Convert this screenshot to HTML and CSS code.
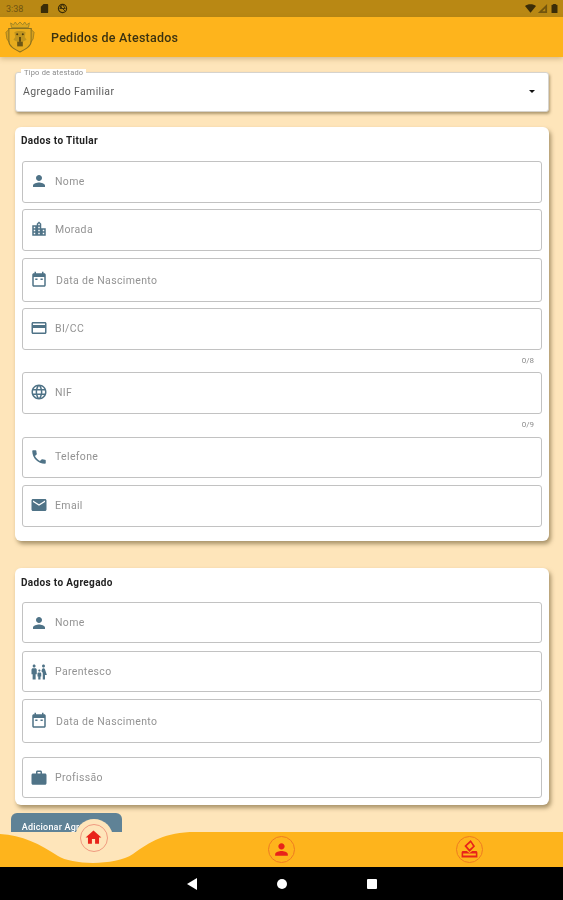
FILE: index.html
```html
<!doctype html>
<html lang="pt">
  <head>
    <meta charset="UTF-8" />
    <meta name="viewport" content="width=device-width, initial-scale=1.0" />
    <title>Pedidos de Atestados</title>
    <link rel="stylesheet" href="styles.css">
  </head>
  <body>
    <!-- Icon sprite -->
    <svg class="sprite" xmlns="http://www.w3.org/2000/svg">
      <symbol id="i-person" viewBox="0 0 24 24"><path d="M12 12c2.21 0 4-1.79 4-4s-1.79-4-4-4-4 1.79-4 4 1.79 4 4 4zm0 2c-2.67 0-8 1.34-8 4v2h16v-2c0-2.66-5.33-4-8-4z"/></symbol>
      <symbol id="i-city" viewBox="0 0 24 24"><path d="M15 11V5l-3-3-3 3v2H3v14h18V11h-6zm-8 8H5v-2h2v2zm0-4H5v-2h2v2zm0-4H5V9h2v2zm6 8h-2v-2h2v2zm0-4h-2v-2h2v2zm0-4h-2V9h2v2zm0-4h-2V5h2v2zm6 12h-2v-2h2v2zm0-4h-2v-2h2v2z"/></symbol>
      <symbol id="i-date" viewBox="0 0 24 24"><path d="M19 3h-1V1h-2v2H8V1H6v2H5c-1.1 0-2 .9-2 2v14c0 1.1.9 2 2 2h14c1.1 0 2-.9 2-2V5c0-1.1-.9-2-2-2zm0 16H5V8h14v11zM7 10h3v2H7zm7 0h3v2h-3z"/></symbol>
      <symbol id="i-card" viewBox="0 0 24 24"><path d="M20 4H4c-1.11 0-1.99.89-1.99 2L2 18c0 1.11.89 2 2 2h16c1.11 0 2-.89 2-2V6c0-1.11-.89-2-2-2zm0 14H4v-6h16v6zm0-10H4V6h16v2z"/></symbol>
      <symbol id="i-globe" viewBox="0 0 24 24"><path d="M11.99 2C6.47 2 2 6.48 2 12s4.47 10 9.99 10C17.52 22 22 17.52 22 12S17.52 2 11.99 2zm6.93 6h-2.95c-.32-1.25-.78-2.45-1.38-3.56 1.84.63 3.37 1.91 4.33 3.56zM12 4.04c.83 1.2 1.48 2.53 1.91 3.96h-3.82c.43-1.43 1.08-2.76 1.91-3.96zM4.26 14C4.1 13.36 4 12.69 4 12s.1-1.36.26-2h3.38c-.08.66-.14 1.32-.14 2 0 .68.06 1.34.14 2H4.26zm.82 2h2.95c.32 1.25.78 2.45 1.38 3.56-1.84-.63-3.37-1.9-4.33-3.56zm2.95-8H5.08c.96-1.66 2.49-2.93 4.33-3.56C8.81 5.55 8.35 6.75 8.03 8zM12 19.96c-.83-1.2-1.48-2.53-1.91-3.96h3.82c-.43 1.43-1.08 2.76-1.91 3.96zM14.34 14H9.66c-.09-.66-.16-1.32-.16-2 0-.68.07-1.35.16-2h4.68c.09.65.16 1.32.16 2 0 .68-.07 1.34-.16 2zm.25 5.56c.6-1.11 1.06-2.31 1.38-3.56h2.95c-.96 1.65-2.49 2.93-4.33 3.56zM16.36 14c.08-.66.14-1.32.14-2 0-.68-.06-1.34-.14-2h3.38c.16.64.26 1.31.26 2s-.1 1.36-.26 2h-3.38z"/></symbol>
      <symbol id="i-phone" viewBox="0 0 24 24"><path d="M6.62 10.79c1.44 2.83 3.76 5.14 6.59 6.59l2.2-2.2c.27-.27.67-.36 1.02-.24 1.12.37 2.33.57 3.57.57.55 0 1 .45 1 1V20c0 .55-.45 1-1 1-9.39 0-17-7.61-17-17 0-.55.45-1 1-1h3.5c.55 0 1 .45 1 1 0 1.25.2 2.45.57 3.57.11.35.03.74-.25 1.02l-2.2 2.2z"/></symbol>
      <symbol id="i-mail" viewBox="0 0 24 24"><path d="M20 4H4c-1.1 0-1.99.9-1.99 2L2 18c0 1.1.9 2 2 2h16c1.1 0 2-.9 2-2V6c0-1.1-.9-2-2-2zm0 4l-8 5-8-5V6l8 5 8-5v2z"/></symbol>
      <symbol id="i-family" viewBox="0 0 24 24"><path d="M16 4c0-1.11.89-2 2-2s2 .89 2 2-.89 2-2 2-2-.89-2-2zm4 18v-6h2.5l-2.54-7.63C19.68 7.55 18.92 7 18.06 7h-.12c-.86 0-1.63.55-1.9 1.37l-.86 2.58c1.08.6 1.82 1.73 1.82 3.05v8h4zm-7.5-10.5c.83 0 1.5-.67 1.5-1.5s-.67-1.5-1.5-1.5S11 9.17 11 10s.67 1.5 1.5 1.5zM5.5 6c1.11 0 2-.89 2-2s-.89-2-2-2-2 .89-2 2 .89 2 2 2zm2 16v-7H9V9c0-1.1-.9-2-2-2H4c-1.1 0-2 .9-2 2v6h1.5v7h4zm6.5 0v-4h1v-4c0-.82-.68-1.5-1.5-1.5h-2c-.82 0-1.5.68-1.5 1.5v4h1v4h3z"/></symbol>
      <symbol id="i-work" viewBox="0 0 24 24"><path d="M20 6h-4V4c0-1.11-.89-2-2-2h-4c-1.11 0-2 .89-2 2v2H4c-1.11 0-1.99.89-1.99 2L2 19c0 1.11.89 2 2 2h16c1.11 0 2-.89 2-2V8c0-1.11-.89-2-2-2zm-6 0h-4V4h4v2z"/></symbol>
      <symbol id="i-home" viewBox="0 0 24 24"><path d="M10 20v-6h4v6h5v-8h3L12 3 2 12h3v8z"/></symbol>
      <symbol id="i-stamp" viewBox="0 0 24 24"><path d="M2 16v6h20v-6c0-1.100-.9-2-2-2h-4.500l-3.500 2.500L8.500 14H4c-1.100 0-2 .9-2 2zm18 3.500H4V17h16zM13.500 0L5.500 7.500 12 15l7-7zm0 3.200l2.800 4.800L12 11.800 8.500 7.500z"/></symbol>
    </svg>

    <div class="screen">
      <!-- Status bar -->
      <div class="statusbar">
        <span class="status-time">3:38</span>
        <svg class="status-icon status-sd" viewBox="0 0 24 24"><path d="M18 2h-8L4 8v12c0 1.1.9 2 2 2h12c1.1 0 2-.9 2-2V4c0-1.1-.9-2-2-2z"/></svg>
        <svg class="status-icon" viewBox="0 0 24 24"><circle cx="12" cy="12" r="9" fill="none" stroke-width="2.4"/><path d="M6 6l12 12M12 3l6 9H6z" fill="none" stroke-width="2"/></svg>
        <span class="status-spacer"></span>
        <svg class="status-icon" viewBox="0 0 24 24"><path d="M12 21L0 6.5C3 3.8 7.3 2.5 12 2.5s9 1.300 12 4z"/></svg>
        <svg class="status-icon status-signal" viewBox="0 0 24 24"><path d="M22 2v20H2zM18 11.500L11.500 18H18z"/></svg>
        <svg class="status-icon" viewBox="0 0 24 24"><path d="M9 2h6v2h2.500c.5 0 1 .5 1 1v16c0 .5-.5 1-1 1h-11c-.5 0-1-.5-1-1V5c0-.5.5-1 1-1H9z"/></svg>
      </div>

      <!-- App bar -->
      <header class="appbar">
        <svg class="crest" viewBox="0 0 32 34">
          <path d="M7 7L6 2l3 2 2-3 2 3 3-3 3 3 2-3 2 3 3-2-1 5z" fill="#e0a81e" stroke="#a08424" stroke-width="1"/>
          <path d="M4 8h24v13c0 6-6 9-12 12C10 30 4 27 4 21z" fill="#e8ac1e" stroke="#8a7020" stroke-width="1.100"/>
          <path d="M1 12l3-3v13l-2-3zM31 12l-3-3v13l2-3z" fill="#d6a020" stroke="#8a7020" stroke-width=".7"/>
          <path d="M10 12c2-2 10-2 12 0l-1 5 2 3-4 2H13l-4-2 2-3z" fill="#c0941e"/>
          <circle cx="13" cy="14" r="1.100" fill="#4d3d10"/>
          <circle cx="19" cy="14" r="1.100" fill="#4d3d10"/>
          <path d="M13 22h6v5h-6z" fill="#6b5516"/>
          <path d="M15 17h2v5h-2z" fill="#5a4712"/>
        </svg>
        <h1 class="appbar-title">Pedidos de Atestados</h1>
      </header>

      <main class="content">
        <div class="select-box">
          <span class="select-legend">Tipo de atestado</span>
          <span class="select-value">Agregado Familiar</span>
          <span class="select-arrow"></span>
        </div>

        <section class="card">
          <h2 class="card-title">Dados to Titular</h2>
          <div class="field"><svg class="field-icon"><use href="#i-person"/></svg><span class="field-label">Nome</span></div>
          <div class="field"><svg class="field-icon"><use href="#i-city"/></svg><span class="field-label">Morada</span></div>
          <div class="field field-tall field-loose"><svg class="field-icon"><use href="#i-date"/></svg><span class="field-label field-label-date">Data de Nascimento</span></div>
          <div class="field"><svg class="field-icon"><use href="#i-card"/></svg><span class="field-label">BI/CC</span></div>
          <div class="counter">0/8</div>
          <div class="field field-flush"><svg class="field-icon"><use href="#i-globe"/></svg><span class="field-label">NIF</span></div>
          <div class="counter counter-wide">0/9</div>
          <div class="field field-flush field-short"><svg class="field-icon"><use href="#i-phone"/></svg><span class="field-label">Telefone</span></div>
          <div class="field field-loose"><svg class="field-icon"><use href="#i-mail"/></svg><span class="field-label">Email</span></div>
        </section>

        <section class="card card-last">
          <h2 class="card-title">Dados to Agregado</h2>
          <div class="field field-short"><svg class="field-icon"><use href="#i-person"/></svg><span class="field-label">Nome</span></div>
          <div class="field field-short field-wider"><svg class="field-icon"><use href="#i-family"/></svg><span class="field-label">Parentesco</span></div>
          <div class="field field-tall field-loose"><svg class="field-icon"><use href="#i-date"/></svg><span class="field-label field-label-date">Data de Nascimento</span></div>
          <div class="field field-short field-apart"><svg class="field-icon"><use href="#i-work"/></svg><span class="field-label">Profissão</span></div>
        </section>

        <button class="add-btn" type="button">Adicionar Agregado</button>
      </main>

      <!-- Bottom navigation -->
      <nav class="bottomnav">
        <svg class="nav-wave" viewBox="0 0 563 35" preserveAspectRatio="none"><path d="M0 0v2c22 1 40 10 58 22 14 9 57 10 75-2C150 10 165 0 195 0z"/></svg>
        <div class="nav-item"><span class="nav-circle nav-circle-active"><svg class="nav-icon"><use href="#i-home"/></svg></span></div>
        <div class="nav-item"><span class="nav-circle"><svg class="nav-icon"><use href="#i-person"/></svg></span></div>
        <div class="nav-item"><span class="nav-circle"><svg class="nav-icon"><use href="#i-stamp"/></svg></span></div>
      </nav>

      <!-- Android navigation -->
      <div class="sysnav">
        <span class="sys-back"></span>
        <span class="sys-home"></span>
        <span class="sys-recent"></span>
      </div>
    </div>
  </body>
</html>
```

FILE: styles.css
```css
* {
  box-sizing: border-box;
}

body {
  margin: 0;
  font-family: Roboto, "Liberation Sans", sans-serif;
  background: #fee5ba;
}

.sprite {
  display: none;
}

.screen {
  display: flex;
  flex-direction: column;
  width: 563px;
  height: 900px;
  overflow: hidden;
  filter: blur(0.4px);
}

/* Status bar */
.statusbar {
  display: flex;
  align-items: center;
  flex: none;
  gap: 6px;
  height: 17px;
  padding: 0 3px 0 6px;
  background: #b98814;
}

.status-time {
  width: 27px;
  font-size: 9px;
  color: #6f5312;
}

.status-icon {
  width: 11px;
  height: 11px;
  fill: #3a2c08;
  stroke: #3a2c08;
  stroke-width: 0;
}

.status-sd {
  margin-right: 1px;
}

.status-signal {
  opacity: 0.55;
  margin: 0 -5px;
}

.status-spacer {
  flex: 1;
}

/* App bar */
.appbar {
  position: relative;
  z-index: 2;
  display: flex;
  align-items: center;
  flex: none;
  height: 40px;
  padding-left: 5px;
  background: #feb41c;
  box-shadow: 0 2px 5px rgba(120, 90, 30, 0.3);
}

.crest {
  width: 30px;
  height: 32px;
}

.appbar-title {
  margin: 0 0 0 16px;
  font-size: 12.5px;
  font-weight: 500;
  letter-spacing: 0.25px;
  color: #3b3210;
}

/* Form */
.content {
  flex: 1;
  min-height: 0;
  overflow: hidden;
  padding: 15px 14px 0 15px;
}

.select-box {
  position: relative;
  display: flex;
  align-items: center;
  justify-content: space-between;
  height: 40px;
  padding: 0 13px 2px 7px;
  background: #fff;
  border: 1px solid #d6d3cd;
  border-radius: 3px;
  box-shadow: 1px 2px 3px rgba(110, 90, 50, 0.55);
}

.select-legend {
  position: absolute;
  top: -4px;
  left: 5px;
  padding: 0 3px;
  font-size: 7.5px;
  line-height: 8px;
  letter-spacing: 0.2px;
  color: #8a8a8a;
  background: #fff;
}

.select-value {
  font-size: 10.5px;
  letter-spacing: 0.35px;
  color: #5c5c5c;
}

.select-arrow {
  width: 0;
  height: 0;
  border-left: 3px solid transparent;
  border-right: 3px solid transparent;
  border-top: 3px solid #111;
}

.card {
  margin-top: 15px;
  padding: 0 7px 14px;
  background: #fff;
  border-radius: 6px;
  box-shadow: 2px 3px 4px rgba(110, 90, 50, 0.6);
}

.card-last {
  margin-top: 27px;
  padding-bottom: 7px;
}

.card-title {
  display: flex;
  align-items: center;
  height: 28px;
  margin: 0 0 6px -1px;
  padding-bottom: 2px;
  font-size: 10px;
  font-weight: 700;
  letter-spacing: 0.35px;
  color: #222;
}

.card-last .card-title {
  padding-top: 2px;
  padding-bottom: 2px;
}

.field {
  display: flex;
  align-items: center;
  height: 42px;
  margin-top: 6px;
  padding: 0 0 2px 7px;
  background: #fff;
  border: 1px solid #c2c2c2;
  border-bottom-width: 1.5px;
  border-radius: 3px;
}

.card-title + .field {
  margin-top: 0;
}

.field-tall {
  height: 44px;
  padding-bottom: 0;
}

.card-last .field {
  padding-bottom: 0;
}

.field-short {
  height: 41px;
}

.field-loose {
  margin-top: 7px;
}

.field-wider {
  margin-top: 8px;
}

.field-apart {
  margin-top: 14px;
}

.field-flush {
  margin-top: 0;
}

.field-icon {
  flex: none;
  width: 18px;
  height: 18px;
  fill: #4f7387;
}

.field-label {
  margin-left: 7px;
  font-size: 10.5px;
  letter-spacing: 0.35px;
  color: #939393;
}

.field-label-date {
  margin-left: 8px;
}

.counter {
  height: 22px;
  padding: 6px 8px 0 0;
  font-size: 8px;
  line-height: 9px;
  text-align: right;
  color: #8c8c8c;
}

.counter-wide {
  height: 23px;
}

.add-btn {
  display: block;
  width: 111px;
  height: 19px;
  margin: 8px 0 0 -4px;
  padding: 8px 6px 0 0;
  font-family: inherit;
  font-size: 9px;
  font-weight: 500;
  line-height: 10px;
  letter-spacing: 0.2px;
  text-align: center;
  color: #fff;
  white-space: nowrap;
  background: #5f8296;
  border: 0;
  border-radius: 6px 6px 0 0;
}

/* Bottom navigation */
.bottomnav {
  position: relative;
  display: grid;
  grid-template-columns: repeat(3, 1fr);
  grid-template-rows: 35px;
  flex: none;
  height: 35px;
  background: #feb41c;
}

.nav-wave {
  position: absolute;
  top: 0;
  left: 0;
  width: 100%;
  height: 100%;
  fill: #fee5ba;
}

.nav-item {
  position: relative;
  display: flex;
  align-items: center;
  justify-content: center;
}

.nav-circle {
  display: flex;
  align-items: center;
  justify-content: center;
  width: 27px;
  height: 27px;
  border: 1px solid #ee7b22;
  border-radius: 50%;
}

.nav-circle-active {
  width: 28px;
  height: 28px;
  margin-bottom: 24px;
  background: #fee5ba;
  border-color: #f09a80;
  box-shadow: 0 0 0 5px #fee5ba;
}

.nav-icon {
  width: 19px;
  height: 19px;
  fill: #e8231a;
}

/* Android navigation */
.sysnav {
  display: grid;
  grid-template-columns: 10px 10px 10px;
  align-items: center;
  justify-content: center;
  flex: none;
  column-gap: 80px;
  height: 33px;
  background: #000;
}

.sys-back {
  width: 0;
  height: 0;
  border-top: 6px solid transparent;
  border-bottom: 6px solid transparent;
  border-right: 10px solid #fff;
}

.sys-home {
  width: 10px;
  height: 10px;
  background: #fff;
  border-radius: 50%;
}

.sys-recent {
  width: 10px;
  height: 10px;
  background: #fff;
  border-radius: 1px;
}
```
